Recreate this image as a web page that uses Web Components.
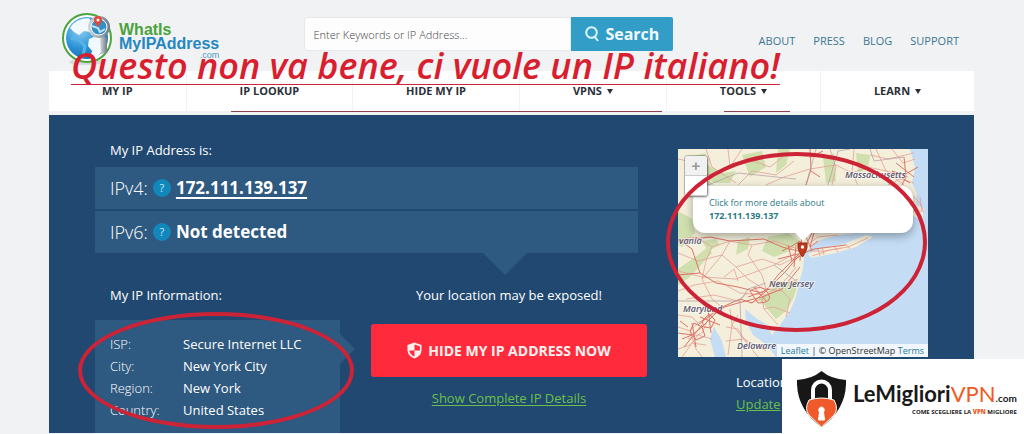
<!DOCTYPE html>
<html lang="en">
  <head>
    <meta charset="UTF-8" />
    <meta name="viewport" content="width=device-width, initial-scale=1" />
    <title>What Is My IP Address</title>
    <style>
      body {
        margin: 0;
        background: #f0f2f4;
        font-family: "Open Sans", "Noto Sans", sans-serif;
        font-size: 13px;
        line-height: 20px;
        color: #fff;
        --panel: #204871;
        --box: #2e5980;
        --marker: #cd2336;
        --green: #6cc04a;
      }
    </style>
  </head>
  <body>
    <ip-page></ip-page>
    <script>
      const define = (name, html) => {
        const template = document.createElement("template");
        template.innerHTML = html;
        customElements.define(
          name,
          class extends HTMLElement {
            constructor() {
              super();
              this.attachShadow({ mode: "open" }).appendChild(
                template.content.cloneNode(true)
              );
            }
          }
        );
      };

      // Header
      define("site-logo", `
        <style>
          :host { display: block; }
          a { display: flex; align-items: center; gap: 4px; text-decoration: none; }
          svg { display: block; }
          .name {
            display: grid; padding-top: 4px;
            font: bold 16px/14px "Liberation Sans", Arial, sans-serif;
            color: #2587c0;
          }
          .green { color: #4ba23c; }
          .com { font-size: 9px; line-height: 8px; font-weight: normal; text-align: right; color: #4d9cc4; }
        </style>
        <a href="#">
          <svg width="54" height="54" viewBox="0 0 54 54" aria-hidden="true">
            <defs>
              <radialGradient id="sea" cx=".35" cy=".3" r=".8">
                <stop offset="0" stop-color="#8fd0f2" />
                <stop offset=".55" stop-color="#2b93d6" />
                <stop offset="1" stop-color="#1566ad" />
              </radialGradient>
              <linearGradient id="steel" x2="1">
                <stop offset="0" stop-color="#d5d9dd" />
                <stop offset="1" stop-color="#6f7a85" />
              </linearGradient>
            </defs>
            <ellipse cx="26" cy="50" rx="18" ry="3" fill="#d4d8da" />
            <circle cx="26" cy="26" r="24" fill="#fff" stroke="#4aa53e" stroke-width="2" />
            <circle cx="26" cy="26" r="21" fill="url(#sea)" />
            <path d="M9 16Q15 6 28 6L30 10 27 14 29 20 23 19 18 23 13 20ZM28 27L35 24 43 28 44 35 36 46 29 47 31 39 27 34Z" fill="#f1f9fe" />
            <path d="M10 26L18 28 24 34 22 44" fill="none" stroke="#58b3e6" stroke-width="3" />
            <path d="M39 25H46V41L40 42Z" fill="url(#steel)" />
            <circle cx="38" cy="15" r="11" fill="url(#steel)" />
            <circle cx="38" cy="15" r="8" fill="#338fc6" stroke="#fff" />
            <path d="M31 14L37 16 39 20 44 17" fill="none" stroke="#bce3f5" stroke-width="2" />
            <path d="M37 15Q33 10 33 8A4 4 0 0 1 41 8Q41 10 37 15Z" fill="#df4a3a" />
            <circle cx="37" cy="8" r="1.5" fill="#fff" />
          </svg>
          <span class="name">
            <span class="green">WhatIs</span>
            <span>MyIPAddress</span>
            <span class="com">.com</span>
          </span>
        </a>`);

      define("search-bar", `
        <style>
          :host { display: block; flex: 0 1 369px; }
          form { display: flex; height: 34px; margin: 0; }
          input {
            flex: 1; min-width: 0; box-sizing: border-box; padding: 0 8px;
            border: 1px solid #e6e8ea; border-radius: 3px 0 0 3px;
            background: #fdfdfd; font: 300 11px "Open Sans", sans-serif; color: #444;
          }
          input::placeholder { color: #444; opacity: 1; }
          button {
            display: flex; align-items: center; justify-content: center; gap: 6px;
            width: 102px; padding: 0; border: 0; border-radius: 0 2px 2px 0;
            background: #329dc6; color: #f2fbff; font: bold 16px "Open Sans", sans-serif;
          }
        </style>
        <form role="search">
          <input type="text" aria-label="Search" placeholder="Enter Keywords or IP Address..." />
          <button type="button">
            <svg width="14" height="16" viewBox="0 0 14 16" fill="none" stroke="#d9f5ff" stroke-width="2" aria-hidden="true">
              <circle cx="6.5" cy="6.5" r="5.3" /><path d="M9.5 10.5L13 15" />
            </svg>
            Search
          </button>
        </form>`);

      define("top-links", `
        <style>
          :host { display: block; }
          nav { display: flex; gap: 18px; }
          a { color: #3f7690; font-size: 11px; text-decoration: none; }
        </style>
        <nav>
          <a href="#">ABOUT</a><a href="#">PRESS</a><a href="#">BLOG</a><a href="#">SUPPORT</a>
        </nav>`);

      define("nav-item", `
        <style>
          :host { display: block; flex: 1 1 auto; border-left: 1px solid #f2f2f3; }
          :host(:first-child) { border-left: 0; }
          a {
            display: flex; justify-content: center; align-items: center; gap: 5px;
            height: 40px; color: #2b3038; font-size: 11px; font-weight: bold; text-decoration: none;
          }
          i { display: none; border: 3px solid transparent; border-top: 5px solid #2b3038; border-bottom: 0; }
          :host([menu]) i { display: block; }
        </style>
        <a href="#"><slot></slot><i></i></a>`);

      define("main-nav", `
        <style>
          :host { display: block; background: #fff; }
          nav { display: flex; }
        </style>
        <nav>
          <nav-item>MY IP</nav-item>
          <nav-item>IP LOOKUP</nav-item>
          <nav-item>HIDE MY IP</nav-item>
          <nav-item menu>VPNS</nav-item>
          <nav-item menu>TOOLS</nav-item>
          <nav-item menu>LEARN</nav-item>
        </nav>`);

      // Red pen marks
      define("pen-ring", `
        <style>
          :host { position: absolute; z-index: 2; box-sizing: border-box; pointer-events: none;
            border: 4px solid var(--marker); border-radius: 50%; }
        </style>`);

      define("pen-note", `
        <style>
          :host {
            position: absolute; z-index: 3; top: 47px; left: 71px; white-space: nowrap;
            border-bottom: 1px solid var(--marker); color: #d81f30;
            font: italic 600 36px/37px "Open Sans", sans-serif;
          }
        </style>
        <slot></slot>`);

      define("pen-line", `
        <style>
          :host { position: absolute; z-index: 1; left: 182px; right: 184px; bottom: -1px; display: flex; height: 1px; gap: 62px; }
          span { background: #8d4148; flex: 431; }
          span + span { flex: 66; }
        </style>
        <span></span><span></span>`);

      // Addresses
      define("ip-row", `
        <style>
          :host { display: flex; align-items: center; height: 42px; padding: 0 15px; background: var(--box); font-size: 18px; }
          .label { font-weight: 300; }
          button {
            width: 18px; height: 18px; margin: 0 5px; padding: 0; border: 0; border-radius: 50%;
            background: #1287ba; color: #c9ecfb; font: 11px/18px "Open Sans", sans-serif;
          }
          .value { font-weight: bold; font-size: 17px; }
        </style>
        <span class="label"><slot name="label"></slot></span>
        <button type="button" aria-label="Help">?</button>
        <span class="value"><slot></slot></span>`);

      define("ip-addresses", `
        <style>
          :host { display: block; margin-right: 9px; }
          h2 { margin: 0 15px 7px; font-size: 13px; font-weight: 400; }
          .rows { display: grid; gap: 2px; position: relative; }
          .rows::after {
            content: ""; position: absolute; top: 100%; left: 75%; margin-left: -19px;
            border: 22px solid transparent; border-top-color: var(--box); border-bottom: 0;
          }
          a { color: #fff; text-underline-offset: 3px; text-decoration-thickness: 2px; }
        </style>
        <h2>My IP Address is:</h2>
        <div class="rows">
          <ip-row><span slot="label">IPv4:</span><a href="#">172.111.139.137</a></ip-row>
          <ip-row><span slot="label">IPv6:</span>Not detected</ip-row>
        </div>`);

      define("ip-information", `
        <style>
          :host { display: block; }
          h2 { margin: 0 15px 15px; font-size: 13px; font-weight: 400; }
          .box { position: relative; padding: 13px 15px 12px; background: var(--box); }
          .box::after {
            content: ""; position: absolute; left: 100%; top: 14px;
            border: 15px solid transparent; border-left-color: var(--box); border-right: 0;
          }
          dl { display: grid; grid-template-columns: 73px 1fr; margin: 0; line-height: 22px; }
          dt { font-weight: 300; }
          dd { margin: 0; }
          pen-ring { left: -17px; right: -14px; top: -8px; height: 117px; }
        </style>
        <h2>My IP Information:</h2>
        <div class="box">
          <dl>
            <dt>ISP:</dt><dd>Secure Internet LLC</dd>
            <dt>City:</dt><dd>New York City</dd>
            <dt>Region:</dt><dd>New York</dd>
            <dt>Country:</dt><dd>United States</dd>
          </dl>
          <pen-ring></pen-ring>
        </div>`);

      define("hide-ip", `
        <style>
          :host { display: flex; flex-direction: column; align-items: center; }
          p { margin: 0 0 19px; }
          button {
            display: flex; align-items: center; justify-content: center; gap: 6px;
            width: 100%; height: 53px; margin-bottom: 11px; border: 0; border-radius: 3px;
            background: #ff2b3c; color: #fff1f0; font: bold 14px "Open Sans", sans-serif;
          }
          a { color: var(--green); text-underline-offset: 2px; }
        </style>
        <p>Your location may be exposed!</p>
        <button type="button">
          <svg width="15" height="17" viewBox="0 0 15 17" aria-hidden="true">
            <path d="M7.5 .5L14.5 3V8Q14.5 14 7.5 16.5 .5 14 .5 8V3Z" fill="#fff1f0" />
            <path d="M7.5 2.5V8.5H13Q13 6 12.8 4.300ZM7.500 8.500V14.500Q3 12.500 2.300 8.500Z" fill="#ff2b3c" />
          </svg>
          HIDE MY IP ADDRESS NOW
        </button>
        <a href="#">Show Complete IP Details</a>`);

      // Map
      define("location-map", `
        <style>
          :host { display: block; position: relative; height: 208px; color: #333; }
          .tiles { display: block; width: 100%; height: 100%; }
          .tiles text { font: italic 600 9px "Open Sans", sans-serif; fill: #5b5670; stroke: #fff8; stroke-width: 2px; paint-order: stroke; }
          .zoom {
            position: absolute; z-index: 1; left: 7px; top: 7px; width: 22px; overflow: hidden;
            border-radius: 3px; box-shadow: 0 0 0 1px #0003, 1px 1px 3px #0006;
          }
          .zoom button {
            display: block; width: 22px; height: 20px; padding: 0; border: 0; border-bottom: 1px solid #ccc;
            background: #f1f1f1; color: #999; font: bold 15px/18px "Liberation Sans", sans-serif;
          }
          .zoom button + button { background: #fff; }
          .popup {
            position: absolute; left: 15px; right: 15px; top: 37px; box-sizing: border-box; height: 47px;
            padding: 10px 16px; border-radius: 12px; background: #fff; color: #2b7a86;
            font-size: 9px; line-height: 13px; box-shadow: 0 3px 10px #0005;
          }
          .popup::after {
            content: ""; position: absolute; top: 100%; left: 50%; margin-left: -8px;
            border: 8px solid transparent; border-top-color: #fff; border-bottom: 0;
          }
          .popup a { display: block; color: inherit; text-decoration: none; }
          .credit {
            position: absolute; right: 0; bottom: 0; padding: 0 4px; background: #ffffffc0;
            font-size: 9px; line-height: 13px;
          }
          .credit a { color: #2b7a96; text-decoration: none; }
          pen-ring { left: -12px; right: 1px; top: 3px; height: 180px; }
        </style>
        <svg class="tiles" viewBox="0 0 250 208" preserveAspectRatio="xMidYMid slice" aria-label="Map">
          <rect width="250" height="208" fill="#c4dcf4" />
          <!-- land -->
          <path fill="#f3efdb" d="M0 0H232L237 18 234 34 239 44 238 56 246 60 244 72 234 66 226 76 205 79 185 83 160 86 142 91 133 98 126 106 125 120 121 134 118 148 112 162 102 176 94 186 89 176 78 169 67 160 68 172 75 186 89 196 98 208H48L44 192 36 178 32 190 37 208H0Z" />
          <path fill="#f3efdb" d="M130 105L145 99 166 95 188 86 195 88 178 98 158 104 133 109Z" />
          <!-- woods -->
          <g fill="#cfdfae">
            <path d="M100 132L120 134 116 148 108 162 98 170 88 158 80 150 90 143Z" />
            <path d="M90 88L110 84 122 92 112 102 96 108 84 102Z" />
            <path d="M0 62L14 70 17 84 4 98 0 96ZM0 120L20 106 30 98 34 104 12 128 0 136Z" />
            <path d="M10 8L28 4 26 14 44 24 58 22 52 34 36 34 20 22ZM64 6L84 2 88 18 72 28ZM100 0H112L108 16 98 24ZM145 8L156 4 158 32 148 34ZM12 30L32 32 36 36H8Z" />
            <path d="M60 92L72 88 70 100 58 106ZM24 92L38 90 42 96 30 102ZM178 4L192 6 190 20 180 24Z" />
          </g>
          <!-- minor roads -->
          <g fill="none" stroke="#e6a196" stroke-width=".8">
            <path d="M0 10L20 14 30 26 52 18 64 0M28 0L34 18 58 34M50 0L52 18 75 12 92 18 110 4 132 8M60 36L74 22 98 26 116 12M88 36L106 28 132 20 158 16 174 24 190 18 208 22 230 28M152 0L158 18 154 36M176 0L174 24 180 36M198 0L208 22 226 36M214 0L225 14 237 10M192 6L210 10 236 4M210 36L222 30 236 34" />
            <path d="M0 90L18 88 34 98 52 92 74 96 96 92 120 100M0 104L20 112 44 106 58 118 84 110 102 116 122 106M34 98L28 112 24 130 34 150 46 160M0 122L24 128 58 130 80 122 96 116 118 104M58 118L70 130 86 140 104 142M0 142L16 136 40 132 62 144 88 146M8 150L36 146 60 152 70 144M46 128L56 120 60 132M52 92L44 106 24 130M74 96L70 106 84 126 88 140" />
            <path d="M118 118L110 128 100 138 112 150 108 168M100 138L84 150 86 160 100 176M86 160L96 158 112 164M72 154L84 150M120 130L106 136M52 160L54 176 66 190 80 208M48 178L60 180 70 196M48 192L66 190 88 202M60 166L54 176 50 206" />
            <path d="M0 178L12 182 20 174 34 166 44 160M0 200L12 196 20 186 34 190M12 182L18 200 24 208M20 174L14 168 0 166M30 170L24 184 10 190M4 208L14 194 28 196" />
            <path d="M134 107L152 101 170 98 190 89M132 102L146 102 164 99M144 98L146 106M156 97L160 103M168 95L172 100M140 100L142 107M132 94L140 88 160 86M242 48L244 62 234 62M232 44L242 54 246 64" />
          </g>
          <!-- motorways -->
          <g fill="none" stroke="#dd7468">
            <path d="M132 0L133 20 128 36M133 8L145 2M133 22L142 28M240 18L226 26 214 22 232 34M226 8L228 28 224 36M218 14L236 28" />
            <path d="M0 126L22 124 38 134 60 138 84 144 96 134 108 122 118 110 125 104 136 100 168 96M0 92L32 88 52 92 86 90 104 98 124 103M40 160L62 150 74 154 88 142 100 126 110 116 122 104M20 176L40 160 60 154 84 148 104 140 122 118M22 124L14 100 0 90M110 96L114 112 124 106 130 92 134 84M104 102L112 98 122 92 128 104M100 110L124 104M118 96L116 118M124 86L122 112M128 88L134 102M136 84L132 98 140 92" />
            <path d="M12 182L16 174 24 178 27 187 18 191 12 182ZM24 172L31 165 37 171 33 179 26 178ZM0 184L14 186 24 178 38 164M14 174L18 198M6 198L24 176M30 160L33 184M4 190L14 186M22 168L42 176M10 178L2 172M72 142Q84 134 90 144T80 154ZM76 138L88 152M70 148L92 140" />
          </g>
          <g fill="none" stroke="#b09aa6" stroke-width=".7">
            <path d="M30 36L60 24 118 30M128 36L138 0M150 36L160 2 172 0M0 152H62M62 152L64 208M62 152L70 140 88 134M96 116L124 136M192 0L196 12 226 8" />
          </g>
          <text x="1" y="95">vania</text>
          <text x="167" y="29">Massachusetts</text>
          <text x="91" y="138">New Jersey</text>
          <text x="5" y="163">Maryland</text>
          <text x="59" y="200">Delaware</text>
          <path d="M124.500 108Q120 101 120 98V94H129V98Q129 101 124.500 108Z" fill="#c13a1e" stroke="#8e2b16" />
          <circle cx="124.500" cy="98" r="1.700" fill="#fff" />
        </svg>
        <div class="zoom">
          <button type="button" aria-label="Zoom in">+</button>
          <button type="button" aria-label="Zoom out"></button>
        </div>
        <div class="popup"><a href="#">Click for more details about <br /><b>172.111.139.137</b></a></div>
        <div class="credit"><a href="#">Leaflet</a> | © OpenStreetMap <a href="#">Terms</a></div>
        <pen-ring></pen-ring>`);

      define("ip-location", `
        <style>
          :host { display: block; padding-top: 9px; }
          .update { margin: 14px 0 0 58px; line-height: 22px; }
          a { display: table; color: var(--green); }
        </style>
        <location-map></location-map>
        <div class="update">Location <a href="#">Update</a></div>`);

      define("ip-panel", `
        <style>
          :host {
            display: grid; grid-template-columns: 245fr 276fr 250px; column-gap: 31px;
            grid-template-rows: auto 1fr; row-gap: 32px;
            margin-top: 4px; padding: 25px 46px 0; background: var(--panel);
          }
          ip-addresses { grid-column: 1 / 3; }
          ip-location { grid-column: 3; grid-row: 1 / 3; }
        </style>
        <ip-addresses></ip-addresses>
        <ip-location></ip-location>
        <ip-information></ip-information>
        <hide-ip></hide-ip>`);

      // Corner badge
      define("vpn-badge", `
        <style>
          :host {
            position: fixed; z-index: 4; right: 0; bottom: 0; display: flex; align-items: center; gap: 7px;
            box-sizing: border-box; width: 242px; height: 75px; padding: 5px 10px 0 15px; background: #fff; color: #191919;
          }
          svg { flex: none; }
          .text { display: grid; justify-items: end; white-space: nowrap; font: bold 22px/22px Lato, sans-serif; }
          b { color: #ee5a24; }
          .vpn { font-weight: 400; }
          small { font-size: 10px; }
          .tag { font: bold 6px/7px "Open Sans", sans-serif; }
        </style>
        <svg width="49" height="57" viewBox="0 0 49 57" aria-hidden="true">
          <path d="M24.500 0Q34 8 49 9Q50 38 24.500 56Q-1 38 0 9Q15 8 24.500 0Z" fill="#171717" />
          <path d="M16 29V19A8.500 8.500 0 0 1 33 19V29" fill="none" stroke="#fff" stroke-width="4" />
          <path d="M12 29Q24.500 25 37 29Q42 38 37 44L24.500 56 12 44Q7 38 12 29Z" fill="#f0592a" stroke="#fff" />
          <path d="M24.500 36A3 3 0 0 1 26.500 41L27.500 49H21.500L22.500 41A3 3 0 0 1 24.500 36Z" fill="#fff" stroke="#fff" />
        </svg>
        <div class="text">
          <span>LeMigliori<b class="vpn">VPN</b><small>.com</small></span>
          <span class="tag">COME SCEGLIERE LA <b>VPN</b> MIGLIORE</span>
        </div>`);

      define("ip-page", `
        <style>
          :host { display: block; position: relative; padding: 0 50px 0 49px; }
          header { display: flex; justify-content: space-between; align-items: center; height: 71px; padding: 0 15px 0 12px; box-sizing: border-box; }
          site-logo { padding-top: 6px; }
          search-bar { padding-bottom: 3px; }
          top-links { padding-top: 11px; }
          .menu { position: relative; }
        </style>
        <header>
          <site-logo></site-logo>
          <search-bar></search-bar>
          <top-links></top-links>
        </header>
        <div class="menu"><main-nav></main-nav><pen-line></pen-line></div>
        <ip-panel></ip-panel>
        <pen-note>Questo non va bene, ci vuole un IP italiano!</pen-note>
        <vpn-badge></vpn-badge>`);
    </script>
  </body>
</html>
